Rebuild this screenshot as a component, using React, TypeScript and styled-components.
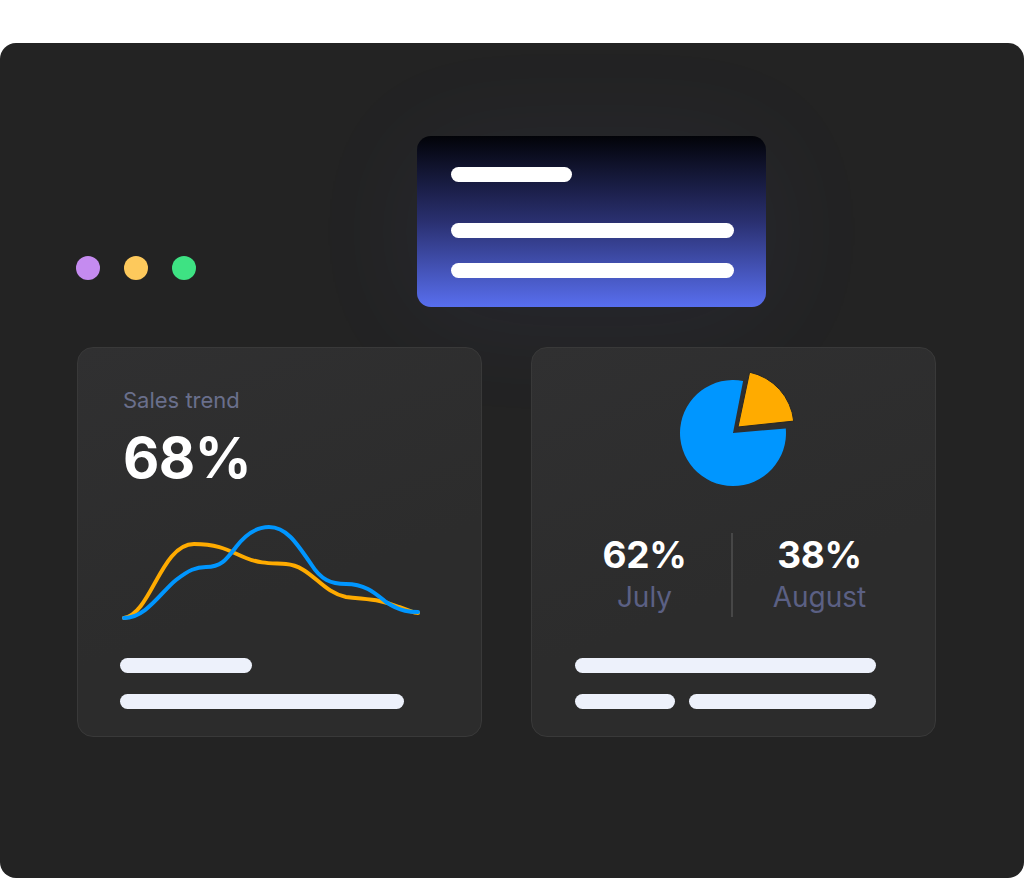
import React from 'react';
import styled, { createGlobalStyle } from 'styled-components';

const GlobalStyle = createGlobalStyle`
  html, body {
    margin: 0;
    padding: 0;
    background: #ffffff;
  }
  body {
    font-family: Inter, 'Noto Sans', sans-serif;
  }
`;

const Panel = styled.div`
  margin-top: 43px;
  width: 1024px;
  height: 835px;
  box-sizing: border-box;
  background: #232323;
  border-radius: 16px;
  padding: 93px 0 0 76px;
  display: flex;
  flex-direction: column;
`;

const TopRow = styled.div`
  display: flex;
  align-items: flex-end;
`;

const Dots = styled.div`
  display: flex;
  gap: 24px;
  padding-bottom: 27px;
`;

const Dot = styled.span<{ $color: string }>`
  width: 24px;
  height: 24px;
  border-radius: 50%;
  background: ${(p) => p.$color};
`;

const HeroCard = styled.div`
  margin-left: 221px;
  width: 349px;
  height: 171px;
  box-sizing: border-box;
  border-radius: 14px;
  background: linear-gradient(180deg, #020308 0%, #2a3070 50%, #586eee 100%);
  box-shadow: 0 10px 120px rgba(100, 115, 230, 0.07);
  padding: 31px 34px;
  display: flex;
  flex-direction: column;
`;

const Bar = styled.div<{ $width: number; $color?: string; $top?: number }>`
  width: ${(p) => p.$width}px;
  height: 15px;
  flex: none;
  border-radius: 8px;
  background: ${(p) => p.$color || '#edf1fb'};
  margin-top: ${(p) => p.$top || 0}px;
`;

const CardRow = styled.div`
  display: flex;
  gap: 49px;
  margin-top: 40px;
  margin-left: 1px;
`;

const Card = styled.div`
  width: 405px;
  height: 390px;
  box-sizing: border-box;
  border-radius: 16px;
  background: linear-gradient(160deg, #303031 0%, #2c2c2c 60%);
  border: 1px solid #393939;
  display: flex;
  flex-direction: column;
`;

const TrendCard = styled(Card)`
  padding: 38px 0 0 42px;
`;

const PieCard = styled(Card)`
  padding: 22px 0 0 43px;
`;

const Label = styled.div`
  padding-left: 3px;
  font-size: 22px;
  line-height: 28px;
  color: #6a6f8c;
  font-weight: 400;
`;

const BigValue = styled.div`
  padding-left: 3px;
  margin-top: 14px;
  font-size: 56px;
  line-height: 60px;
  font-weight: 700;
  color: #ffffff;
  letter-spacing: -0.5px;
`;

const Chart = styled.svg`
  margin-top: 34px;
  margin-left: 1px;
  display: block;
  overflow: visible;
`;

const PieWrap = styled.svg`
  display: block;
  margin-left: 99px;
  overflow: visible;
`;

const Stats = styled.div`
  margin-top: 43px;
  margin-left: -17px;
  display: grid;
  grid-template-columns: 173px 2px 173px;
  height: 84px;
`;

const Stat = styled.div`
  display: flex;
  flex-direction: column;
  align-items: center;
`;

const StatValue = styled.div`
  font-size: 37px;
  line-height: 44px;
  font-weight: 700;
  color: #ffffff;
  letter-spacing: -0.3px;
`;

const StatLabel = styled.div`
  margin-top: 3px;
  font-size: 28px;
  line-height: 34px;
  color: #5b6084;
`;

const Divider = styled.div`
  background: #474747;
`;

const BarRow = styled.div`
  display: flex;
  gap: 14px;
  margin-top: 21px;
`;

export default function App() {
  return (
    <>
      <GlobalStyle />
      <Panel>
        <TopRow>
          <Dots>
            <Dot $color="#c58bf0" />
            <Dot $color="#fdc95c" />
            <Dot $color="#3ee283" />
          </Dots>
          <HeroCard>
            <Bar $width={121} $color="#ffffff" />
            <Bar $width={283} $color="#ffffff" $top={41} />
            <Bar $width={283} $color="#ffffff" $top={25} />
          </HeroCard>
        </TopRow>
        <CardRow>
          <TrendCard>
            <Label>Sales trend</Label>
            <BigValue>68%</BigValue>
            <Chart width="300" height="100" viewBox="0 0 300 100">
              <path
                d="M3 96 C 30 92 40 22 73 22 C 100 22 110 30 125 36 C 140 42 150 41 165 42 C 190 44 200 70 225 75 C 250 78 258 77 278 85 C 290 89 293 91 297 91"
                fill="none"
                stroke="#ffab00"
                strokeWidth="4"
                strokeLinecap="round"
              />
              <path
                d="M3 96 C 25 96 40 70 55 58 C 68 48 75 45 85 45 C 100 45 105 38 115 25 C 125 12 135 5 148 5 C 165 5 175 20 190 42 C 200 58 210 62 225 62 C 245 62 255 72 265 80 C 280 90 290 90 297 90"
                fill="none"
                stroke="#0096ff"
                strokeWidth="4"
                strokeLinecap="round"
              />
            </Chart>
            <Bar $width={132} $top={36} />
            <Bar $width={284} $top={21} />
          </TrendCard>
          <PieCard>
            <PieWrap width="126" height="120" viewBox="0 0 126 120">
              <path d="M59 63 L111.8 58.4 A53 53 0 1 1 69.1 11 Z" fill="#0096ff" />
              <path
                d="M64 57 L75.6 2.2 A56 56 0 0 1 119.7 51.1 Z"
                fill="#ffab00"
                stroke="#262626"
                strokeWidth="1"
                strokeLinejoin="round"
              />
            </PieWrap>
            <Stats>
              <Stat>
                <StatValue>62%</StatValue>
                <StatLabel>July</StatLabel>
              </Stat>
              <Divider />
              <Stat>
                <StatValue>38%</StatValue>
                <StatLabel>August</StatLabel>
              </Stat>
            </Stats>
            <Bar $width={301} $top={41} />
            <BarRow>
              <Bar $width={100} />
              <Bar $width={187} />
            </BarRow>
          </PieCard>
        </CardRow>
      </Panel>
    </>
  );
}
